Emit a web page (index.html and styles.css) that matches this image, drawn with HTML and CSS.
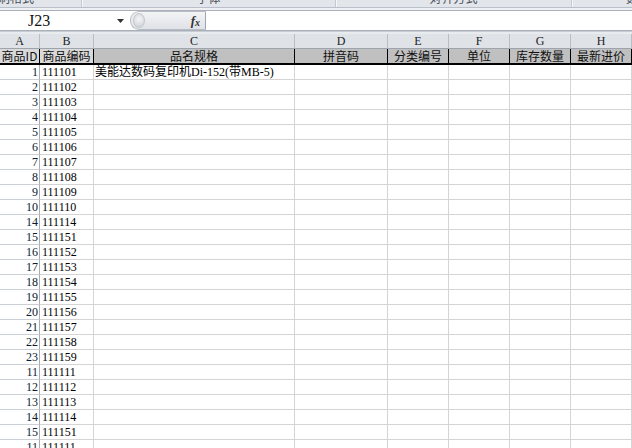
FILE: index.html
```html
<!DOCTYPE html>
<html lang="zh-CN">
<head>
  <meta charset="UTF-8">
  <title>商品资料</title>
  <link rel="stylesheet" href="styles.css">
</head>
<body>
  <!-- ribbon bottom edge (group captions cut off) -->
  <div class="ribbon">
    <div class="group g1"><span>式刷格式</span></div>
    <div class="group g2"><span>字体</span></div>
    <div class="group g3"><span>对齐方式</span></div>
    <div class="group g4"><span>数字</span></div>
  </div>
  <div class="ribbon-gap"></div>

  <div class="formula-bar">
    <div class="name-box">
      <span class="cell-ref">J23</span>
      <svg class="drop" width="7" height="4" viewBox="0 0 7 4"><path d="M0 0h7L3.5 4z" fill="#333"/></svg>
    </div>
    <div class="fx-box">
      <span class="knob"></span>
      <span class="fx">f<sub>x</sub></span>
    </div>
    <div class="formula-input"></div>
  </div>
  <div class="bar-gap"></div>

  <div class="sheet">
    <div class="row letters">
      <div class="cell">A</div>
      <div class="cell">B</div>
      <div class="cell">C</div>
      <div class="cell">D</div>
      <div class="cell">E</div>
      <div class="cell">F</div>
      <div class="cell">G</div>
      <div class="cell">H</div>
    </div>
    <div class="row titles">
      <div class="cell light">商品ID</div>
      <div class="cell light">商品编码</div>
      <div class="cell">品名规格</div>
      <div class="cell">拼音码</div>
      <div class="cell">分类编号</div>
      <div class="cell">单位</div>
      <div class="cell">库存数量</div>
      <div class="cell">最新进价</div>
    </div>
    <div id="rows"></div>
  </div>

  <script>
    var ids = [1, 2, 3, 4, 5, 6, 7, 8, 9, 10, 14, 15, 16, 17, 18, 19, 20, 21, 22, 23, 11, 12, 13, 14, 15, 11];
    var codes = ['111101', '111102', '111103', '111104', '111105', '111106', '111107', '111108', '111109', '111110',
                 '111114', '111151', '111152', '111153', '111154', '111155', '111156', '111157', '111158', '111159',
                 '111111', '111112', '111113', '111114', '111151', '111111'];

    var rows = document.getElementById('rows');
    var html = '';
    for (var i = 0; i < ids.length; i++) {
      var name = i === 0 ? '美能达数码复印机Di-152(带MB-5)' : '';
      html += '<div class="row data">' +
        '<div class="cell num">' + ids[i] + '</div>' +
        '<div class="cell code">' + codes[i] + '</div>' +
        '<div class="cell text">' + name + '</div>' +
        '<div class="cell"></div><div class="cell"></div><div class="cell"></div>' +
        '<div class="cell"></div><div class="cell"></div>' +
        '</div>';
    }
    rows.innerHTML = html;
  </script>
</body>
</html>
```

FILE: styles.css
```css
body {
  margin: 0;
  width: 632px;
  height: 448px;
  overflow: hidden;
  background-color: #fff;
  font-family: 'Liberation Serif', 'Noto Sans CJK SC', serif;
  font-size: 12px;
  color: #000;
}

/* ribbon strip */
.ribbon {
  display: flex;
  height: 7px;
  background-color: #e2e6eb;
  border-bottom: 1px solid #b9c0c9;
  overflow: hidden;
}

.group {
  border-right: 1px solid #c3c9d1;
  box-shadow: 1px 0 0 #f6f7f9;
  overflow: hidden;
  text-align: center;
  color: #4a4f57;
  font-family: 'Noto Sans CJK SC', sans-serif;
  font-size: 12px;
}

.group span {
  display: block;
  margin-top: -10px;
  line-height: 16px;
}

.g1 { width: 81px; text-align: left; }
.g1 span { margin-left: -14px; }
.g2 { width: 253px; }
.g3 { width: 235px; }
.g4 { flex: 1; border-right: none; text-align: left; }
.g4 span { margin-left: 54px; }

.ribbon-gap {
  height: 2px;
  background-color: #eef0f3;
  border-bottom: 1px solid #a9b0ba;
}

/* formula bar */
.formula-bar {
  display: flex;
  height: 19px;
  background-color: #fff;
  border-bottom: 1px solid #a9b0ba;
}

.name-box {
  width: 126px;
  display: flex;
  align-items: center;
  position: relative;
}

.cell-ref {
  margin-left: 28px;
  font-size: 16px;
  line-height: 19px;
  color: #111;
}

.drop {
  position: absolute;
  left: 117px;
  top: 8px;
}

.fx-box {
  width: 76px;
  margin-left: 4px;
  display: flex;
  align-items: center;
  justify-content: space-between;
  border: 1px solid #b9bec6;
  border-right: 1px solid #9ea5ae;
  border-radius: 9px 0 0 9px;
  background: linear-gradient(#f3f4f6, #dfe2e6);
  box-sizing: border-box;
}

.knob {
  width: 10px;
  height: 13px;
  margin-left: 2px;
  border-radius: 50%;
  background: radial-gradient(circle at 50% 40%, #f4f5f7, #c9cdd3);
  border: 1px solid #c4c8ce;
}

.fx {
  margin-right: 5px;
  font-style: italic;
  font-weight: bold;
  font-size: 13px;
  color: #333;
}

.fx sub {
  font-size: 10px;
  vertical-align: -1px;
}

.formula-input {
  flex: 1;
}

.bar-gap {
  height: 3px;
  background-color: #e9ecef;
  border-top: 1px solid #c7ccd3;
  box-sizing: border-box;
}

/* sheet grid */
.row {
  display: grid;
  grid-template-columns: 40px 54px 201px 93px 61px 61px 61px 61px;
}

.cell {
  box-sizing: border-box;
  border-right: 1px solid #d4d4d4;
  border-bottom: 1px solid #d4d4d4;
  overflow: hidden;
  white-space: nowrap;
}

.letters .cell {
  height: 15px;
  line-height: 14px;
  text-align: center;
  background-color: #dfe3e8;
  border-right-color: #b8bec6;
  border-bottom-color: #9da4ad;
  color: #222;
}

.titles .cell {
  height: 16px;
  line-height: 14px;
  text-align: center;
  background-color: #c0c0c0;
  border-right-color: #000;
  border-bottom: 2px solid #000;
  font-family: 'Noto Sans CJK SC', sans-serif;
  font-size: 12px;
  color: #111;
}

.titles .light {
  background-color: #d9d9d9;
}

.data .cell {
  height: 15px;
  line-height: 15px;
}

.data .num {
  text-align: right;
  padding-right: 1px;
  border-right-color: #a9aeb5;
  border-bottom-color: #cbd0d6;
  color: #0d1a33;
}

.data .code {
  padding-left: 2px;
}

.data .text {
  padding-left: 1px;
}
```
